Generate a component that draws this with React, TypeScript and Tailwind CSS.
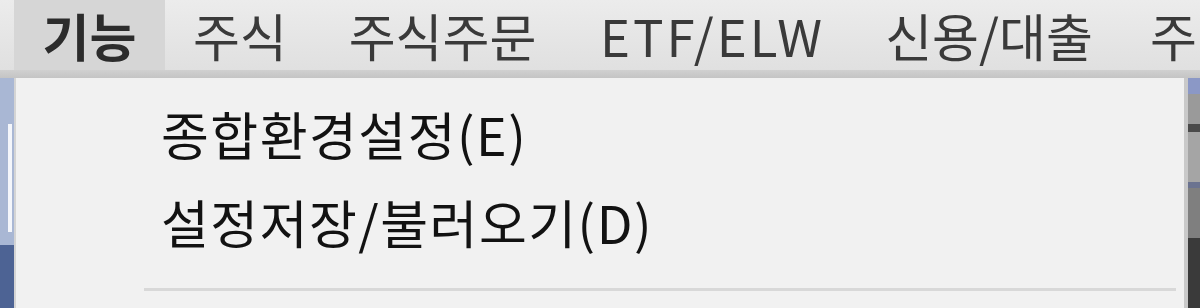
import React from "react";

export default function App() {
  return (
    <div
      className="w-[1200px] h-[308px] overflow-hidden flex flex-col bg-[#f0f0f0]"
      style={{ fontFamily: '"Noto Sans CJK KR", "Noto Sans", sans-serif' }}
    >
      {/* menu bar */}
      <div className="h-[70px] flex items-stretch bg-gradient-to-b from-[#ececec] to-[#e0e0e0] shrink-0 whitespace-nowrap text-[51px] leading-[68px] text-[#3a3a3a]">
        <div className="w-[14px] shrink-0" />
        <div className="w-[151px] shrink-0 bg-[#d6d6d6] flex items-center justify-center font-bold text-[#2c2c2c]">
          기능
        </div>
        <div className="w-[150px] shrink-0 flex items-center justify-center">주식</div>
        <div className="w-[255px] shrink-0 flex items-center justify-center">주식주문</div>
        <div className="w-[285px] shrink-0 flex items-center justify-center tracking-[3px]">ETF/ELW</div>
        <div className="w-[268px] shrink-0 flex items-center justify-center">신용/대출</div>
        <div className="shrink-0 flex items-center pl-[27px]">주</div>
      </div>
      <div className="h-[8px] shrink-0 bg-gradient-to-b from-[#d0d0d0] to-[#c4c4c4]" />
      {/* body */}
      <div className="flex-1 flex">
        {/* left content strip */}
        <div className="w-[14px] flex flex-col">
          <div className="h-[167px] bg-[#a9b7d4] flex">
            <div className="w-[8px]" />
            <div className="mt-[46px] h-[108px] w-[4px] bg-[#f4f6fb]" />
          </div>
          <div className="flex-1 bg-[#4d6394]" />
        </div>
        {/* dropdown */}
        <div className="flex-1 bg-[#f1f1f1] border-l-[2px] border-[#d4d4d4] flex flex-col">
          <div className="h-[12px]" />
          <div className="h-[88px] flex items-center pl-[145px] text-[52px] tracking-[1.5px] text-[#121212] leading-normal">
            종합환경설정(E)
          </div>
          <div className="h-[88px] flex items-center pl-[145px] text-[52px] tracking-[1.5px] text-[#121212] leading-normal">
            설정저장/불러오기(D)
          </div>
          <div className="mt-[22px] ml-[128px] mr-[8px] h-[3px] bg-[#d8d8d8]" />
        </div>
        <div className="w-[4px] bg-[#c9c9c9]" />
        {/* right content strip */}
        <div className="w-[12px] flex flex-col">
          <div className="h-[16px] bg-[#8b98c6]" />
          <div className="h-[30px] bg-[#9a9a9a]" />
          <div className="h-[8px] bg-[#4a4a4a]" />
          <div className="h-[50px] bg-[#a5a5a5]" />
          <div className="h-[6px] bg-[#6b7390]" />
          <div className="h-[50px] bg-[#7f7f7f]" />
          <div className="flex-1 bg-[#3a3a3a]" />
        </div>
      </div>
    </div>
  );
}
